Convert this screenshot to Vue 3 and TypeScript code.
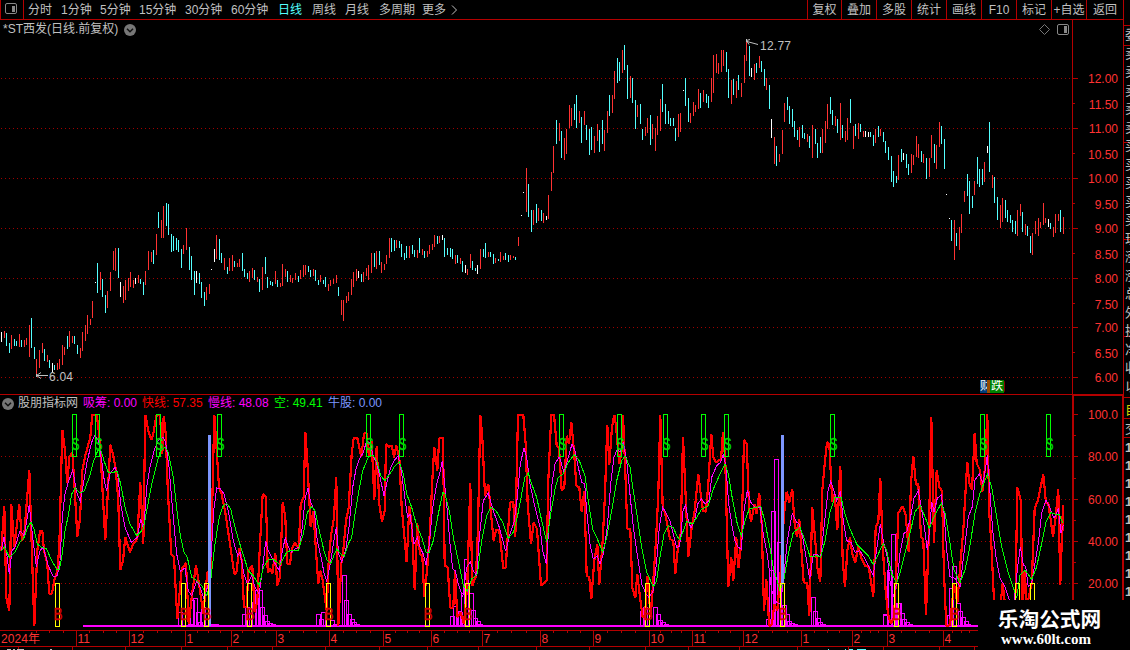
<script setup lang="ts">
interface Block { x: number; y: number; data: string }
interface Candle { x: number; y: number; h: number; c: string }

const periods = ['分时', '1分钟', '5分钟', '15分钟', '30分钟', '60分钟', '日线', '周线', '月线', '多周期', '更多']
const tools = ['复权', '叠加', '多股', '统计', '画线', 'F10', '标记', '+自选', '返回']

const readings = [
  { label: '股朋指标网', color: 'plain' },
  { label: '吸筹: 0.00', color: 'magenta' },
  { label: '快线: 57.35', color: 'red' },
  { label: '慢线: 48.08', color: 'magenta' },
  { label: '空: 49.41', color: 'green' },
  { label: '牛股: 0.00', color: 'blue' },
]

// Series are stored in thirds of a pixel, relative to the origin of their block.
const U = 3
const palette: Record<string, string> = { r: '#ff3232', c: '#54ffff', w: '#ffffff' }

const candleBlocks: Block[] = [
  { x: 0, y: 190, data: 'w4,426,456 r13,423,444 c19,429,468 c28,459,489 r34,435,477 c43,447,468 c49,453,468 r58,432,471 c64,450,471 r73,450,471 r79,444,465 r88,405,501 c94,384,474 c103,471,507 r109,507,552 r118,480,534 r127,459,489 c133,477,513 r142,495,516 c148,510,534 w157,519,546 c163,525,540 r172,519,540 r178,507,537 r187,465,525 r193,471,495 c202,438,477 r208,423,471 r217,438,459 c223,438,462 c232,465,492 r241,474,504 r247,426,483 r256,405,453 r262,375,432 r271,387,405 r277,333,384 w286,276,279 c292,219,309 r301,246,300 c307,267,321 c316,315,369 r322,303,354 r331,246,303 r340,183,240 r346,174,243 c355,174,264 w361,276,321 r370,288,339 r376,270,330 r385,264,303 r391,246,291 r400,270,294 w406,264,282 r415,255,279 c421,267,282 c430,276,315 r436,243,285 r445,183,240 r454,186,216 c460,180,222 r469,132,195 c475,66,114 r484,90,144 r490,48,144 c499,39,108 c505,42,135 c514,132,186 c520,138,183 c529,144,180 c535,150,186 c544,177,234 r550,165,192 r559,114,180 c568,171,240 c574,198,270 c583,243,315 w589,243,279 c598,249,282 c604,276,324 c613,306,348 r619,291,330 r628,282,312 w634,237,240 w643,177,216 r649,135,207 c658,147,210 c664,189,219 r673,204,240 c682,231,252 r688,204,243 r697,195,243 c703,213,231 r712,219,231 r718,207,231 c727,189,243 c733,237,261 c742,249,267 r748,243,276 r757,234,264 c763,240,270 r772,261,276 c778,267,306 r787,231,300' },
  { x: 260, y: 190, data: 'c16,201,252 c22,261,294 c31,273,285 c37,276,288 r46,243,282 c52,270,291 r61,279,291 r67,222,288 r76,237,261 c82,243,276 r91,255,276 r97,264,279 r106,249,270 c115,258,276 r121,240,267 r130,225,261 r136,225,255 c145,228,246 c151,240,261 r160,237,258 c166,240,273 c175,270,285 r181,255,276 c190,270,282 c196,261,291 r205,282,303 r211,270,288 r220,267,282 r229,255,279 c235,291,318 r244,330,375 r250,330,393 r259,318,339 r265,306,333 r274,267,315 r280,246,291 r289,237,273 w295,243,264 c304,252,276 r310,246,276 r319,234,258 r325,225,270 r334,189,249 c343,189,231 r349,183,237 c358,183,225 r364,216,249 r373,222,240 r379,195,222 r388,144,204 c394,144,186 c403,150,183 r409,150,174 c418,153,174 c424,162,201 c433,189,210 c439,168,204 r448,168,204 c457,165,192 c463,180,201 r472,180,204 c478,144,189 r487,177,195 c493,183,204 r502,183,201 r508,165,192 r517,162,180 r523,135,171 c532,138,162 r538,138,159 w547,135,150 c553,144,201 c562,174,195 c571,174,201 c577,177,207 r586,195,222 c592,195,219 r601,204,222 c607,213,246 w616,225,249 r622,237,255 r631,192,234 c637,213,240 c646,234,243 w652,225,252 r661,177,237 c670,177,201 c676,159,204 r685,186,201 c691,186,201 c700,192,222 r706,204,219 c715,207,213 r721,186,216 r730,198,210 c736,189,210 c745,195,216 r751,195,210 r760,198,204 c766,201,210 r775,141,168' },
  { x: 500, y: 30, data: 'w64,555,558 w70,486,489 r79,414,546 c85,462,561 c94,540,606 r100,540,585 c109,522,579 r115,534,573 c124,540,573 r130,549,579 w139,558,570 r145,495,567 r154,426,483 r160,348,429 c169,270,342 r178,279,333 c184,303,384 r193,324,390 r199,297,372 r208,225,294 r214,234,288 c223,222,270 c229,195,294 r238,243,279 c244,261,339 r253,243,285 c259,285,330 c268,297,375 c274,291,360 r283,318,369 r292,282,333 c298,300,366 c307,270,342 r313,300,363 r322,243,309 c328,195,258 r337,195,249 r343,123,207 c352,84,159 c358,96,153 r367,60,129 c373,45,120 c382,105,207 r391,138,204 c397,144,219 c406,210,297 r412,225,261 c421,222,282 c427,297,330 r436,291,318 r442,264,309 c451,255,345 r457,282,327 r466,294,363 r472,258,315 r481,207,303 c487,162,246 c496,222,282 c505,243,282 c511,264,288 c520,264,288 c526,294,333 r535,252,321 r541,249,306 w550,180,183 c556,144,228 c565,204,276 r571,249,279 r580,216,258 r586,225,246 r595,177,237 c601,189,234 r610,180,216 c619,192,219 c625,198,234 r634,144,216 r640,75,189 r649,72,129 r655,99,132 r664,60,126 r670,60,108 c679,66,126 c685,117,204 r694,150,222 c700,147,195 r709,153,204 c715,135,180 r724,159,201 r733,75,159 r739,36,93 c748,48,138 w754,114,141 r763,102,150 c769,99,129 r778,78,114 c784,93,126 c793,117,168 r799,144,180 c808,165,237 w814,267,324 r823,321,402 c829,348,408 r838,372,396' },
  { x: 780, y: 30, data: 'r7,300,372 r13,219,276 c22,201,240 c28,228,282 c37,237,291 c43,273,321 c52,300,330 r58,291,351 c67,285,324 c73,309,327 r82,312,336 c88,318,354 r97,285,384 c106,297,342 c112,339,384 c121,321,369 r127,297,369 r136,273,339 r142,222,297 c151,201,252 c157,240,285 r166,258,288 c172,267,309 r181,219,330 c187,285,324 r196,303,336 r202,264,330 c211,207,279 r220,288,357 c226,282,318 r235,279,327 c241,282,306 r250,303,321 w256,303,321 w265,306,321 c271,306,321 c280,315,348 r286,297,339 c295,288,321 r301,297,318 c310,306,336 c316,333,369 c325,351,390 c334,378,456 c340,423,471 c349,438,459 r355,375,450 c364,357,396 w370,369,390 c379,372,414 c385,402,435 r394,372,429 r400,375,405 r409,318,381 r415,342,384 c424,363,396 r430,372,399 c439,384,447 r448,384,441 r454,315,384 c463,342,399 r469,345,417 r478,276,351 c484,288,342 c493,327,417 w499,492,495 w508,564,567 c514,570,633 r523,570,690 c529,609,648 r538,591,660 r544,552,609 r553,483,516 c562,432,498 c568,453,552 c577,498,534 r583,453,495 c592,381,462 c598,417,471 c607,417,465 r613,396,456 w622,348,369 c628,276,426 r637,435,474 c643,441,519 c652,501,570 r661,525,594 r667,504,576 c676,510,564 c682,540,576 c691,555,579 c697,570,606 c706,573,612 r712,540,618 r721,522,558 c727,546,606 r736,582,615 c742,588,618 c751,618,669 r757,609,675 r766,573,612 r775,564,618 r781,576,594 r790,519,585 r796,564,579 w805,567,591 c811,579,597 r820,591,621 r826,552,609 r835,552,573 c841,540,606 r850,561,612' },
]

const candles: Candle[] = candleBlocks.flatMap((b) =>
  b.data.split(' ').map((s) => {
    const [x, top, bottom] = s.slice(1).split(',').map(Number)
    return { x: b.x + Math.floor(x / U), y: b.y + Math.round(top / U), h: Math.round((bottom - top) / U), c: palette[s[0]] }
  }),
)

const fast: Block[] = [
  { x: 0, y: 394, data: '4,472 13,335 19,610 28,652 34,330 43,460 58,330 66,440 73,420 88,228 103,697 112,470 120,412 127,410 132,470 142,510 148,600 156,598 163,560 172,530 178,460 187,107 195,170 202,268 208,190 217,175 225,300 232,428 240,375 247,230 256,185 271,130 277,62 290,62 296,110 303,205 316,438 331,152 340,185 347,225 355,320 361,528 369,500 376,430 390,475 400,450 412,435 421,265 430,450 436,62 445,110 454,138 460,120 469,65 480,62 487,180 491,65 497,120 503,280 514,482 522,490 532,675 545,525 558,507 566,690 575,610 588,513 600,590 610,660 622,535 632,530 643,62 650,170 657,280 665,300 675,350 690,450' },
  { x: 220, y: 394, data: '43,540 49,538 58,462 65,500 72,640 80,640 85,530 97,515 104,655 112,620 120,450 128,300 137,308 141,420 143,535 150,525 157,538 166,478 172,575 180,550 188,324 196,370 202,510 210,510 216,465 225,445 236,465 242,330 251,310 256,113 262,200 272,400 280,350 288,470 295,570 301,530 308,560 320,650 326,500 333,425 342,370 349,248 355,697 364,510 370,470 378,380 386,340 395,180 401,132 412,132 424,190 432,118 440,118 447,190 455,140 463,318 470,155 478,330 486,383 494,350 498,150 506,158 515,155 522,190 529,155 538,190 545,340 560,505 568,337 576,400 584,588 592,388 600,480 607,485 613,610 622,520 630,410 637,260 643,160 652,230 658,132 669,132 674,515 683,520 691,642 700,640' },
  { x: 440, y: 394, data: '45,530 52,670 62,655 72,690 82,570 91,268 97,575 108,545 114,400 121,62 127,130 135,305 145,270 152,350 161,440 168,408 178,410 190,523 197,520 210,325 220,325 226,430 234,62 250,62 257,150 263,330 273,450 281,385 291,405 303,575 320,558 324,280 334,62 342,62 350,155 357,160 365,290 373,282 380,125 387,150 394,85 402,170 409,275 418,280 425,355 433,290 440,545 448,550 454,615 463,500 472,450 478,572 488,440 495,300 502,92 508,212 516,100 523,62 528,95 538,210 545,170 549,62 556,230 562,405 571,405 577,580 586,612 592,540 600,610 608,670 615,670 622,545 632,670 640,560 648,440 655,300 661,62' },
  { x: 660, y: 394, data: '8,340 16,360 30,435 40,440 46,540 53,470 62,420 69,128 78,330 85,490 95,400 104,350 115,240 122,300 129,350 138,353 145,270 154,120 160,190 168,205 183,195 189,115 196,200 205,580 214,490 220,560 229,430 235,523 244,450 252,138 260,150 267,340 273,383 284,330 290,360 298,297 305,390 312,650 319,555 328,697 336,690 343,630 352,650 362,530 372,360 380,293 388,325 397,285 403,380 411,430 418,375 431,565 442,568 448,665 457,340 465,430 472,520 481,565 487,290 494,210 501,145 508,150 517,325 524,300 532,408 541,215 548,500 555,578 562,470 570,430 577,480 586,505 595,458 605,495 615,515 626,518 640,608 647,400 655,385 661,252 668,460 677,590 684,660 693,690 702,670 709,530' },
  { x: 880, y: 370, data: '55,430 68,408 77,435 86,545 93,340 100,258 108,345 115,340 123,500 130,510 138,735 147,480 154,140 162,520 170,300 178,350 186,365 192,610 199,768 210,765 222,640 232,700 243,560 250,480 262,275 268,340 276,360 284,188 290,280 300,300 307,365 314,300 322,133 328,430 334,520 343,710 361,710 368,640 376,710 400,760 407,655 412,352 422,390 428,710 434,600 440,710 455,640 464,415 474,390 490,313 498,400 505,400 512,450 519,500 526,450 535,358 541,645 549,405 550,482' },
]

const slow: Block[] = [
  { x: 0, y: 394, data: '4,470 12,430 20,480 28,540 36,470 45,460 60,410 73,425 88,332 97,420 109,518 120,470 130,460 145,515 160,548 172,545 180,500 187,370 195,300 205,265 218,228 230,295 241,322 250,270 262,200 275,145 284,125 295,140 305,200 313,260 320,290 330,240 345,220 353,240 362,330 375,400 394,445 412,430 422,375 431,405 440,280 450,220 462,170 475,140 490,130 497,145 507,220 518,350 530,480 541,532 555,522 565,590 575,605 590,560 600,580 612,615 625,570 634,480 641,350 650,282 660,283 672,300 685,350 700,440 713,485' },
  { x: 220, y: 394, data: '60,475 72,540 82,570 95,545 105,580 118,600 128,520 137,440 145,470 160,500 178,530 188,465 196,432 205,460 215,475 228,463 238,460 247,400 256,310 264,283 272,325 283,350 292,440 303,490 313,540 320,560 331,510 340,450 349,400 356,480 365,503 377,470 387,400 398,280 408,225 418,195 430,175 440,140 452,150 460,190 468,200 478,240 492,305 502,260 512,220 522,200 535,185 545,240 556,320 563,370 570,360 582,450 592,430 600,460 610,480 618,512 628,450 637,350 650,270 660,235 667,200 673,260 682,350 690,450' },
  { x: 440, y: 394, data: '38,525 46,530 55,570 68,610 80,520 91,503 100,530 110,545 118,430 130,320 145,297 160,350 178,400 197,472 210,420 222,385 232,310 241,210 252,162 260,190 270,270 285,340 300,400 308,470 319,510 328,380 336,270 345,210 358,188 372,235 385,190 396,150 405,170 415,220 425,265 434,270 440,350 450,450 460,495 472,485 480,510 490,480 502,400 512,270 522,190 532,165 540,175 550,145 560,200 568,280 580,400 590,470 605,570 618,600 627,610 640,590 650,500 658,400 668,340 680,360 690,380 700,420' },
  { x: 660, y: 394, data: '50,460 58,458 62,430 69,350 77,332 85,380 93,403 104,380 113,330 124,315 135,330 147,320 155,250 170,215 182,205 190,180 198,220 206,330 215,390 225,440 235,460 244,466 252,350 262,288 272,325 285,340 300,340 310,420 322,480 335,590 350,625 362,630 372,540 382,440 397,358 410,385 418,390 428,430 440,500 449,555 460,480 470,480 482,490 494,380 504,290 512,262 522,290 530,320 541,292 550,380 560,440 573,445 585,475 600,470 612,490 628,520 640,545 648,480 661,390 670,440 682,490 690,560 700,610 712,560' },
  { x: 880, y: 370, data: '60,550 72,490 80,485 90,450 102,385 115,362 125,420 133,470 142,540 150,470 155,395 162,425 172,385 184,375 192,430 200,540 210,620 225,625 240,650 252,550 265,440 277,410 285,330 298,312 308,340 316,300 322,255 330,370 338,480 348,560 360,625 375,650 388,690 400,720 412,600 421,530 430,585 437,590 445,650 455,640 465,580 475,520 485,430 498,390 510,415 522,445 530,430 535,415 543,490 550,465' },
]

const empty: Block[] = [
  { x: 0, y: 394, data: '4,472 13,458 28,490 45,475 60,445 73,430 85,395 93,385 102,405 112,450 125,460 140,465 155,500 170,525 178,525 185,490 195,410 205,365 215,300 226,282 240,297 253,290 268,250 280,205 293,170 303,170 312,200 325,235 340,235 352,232 362,270 375,340 390,390 410,425 430,405 440,350 455,270 470,210 480,175 495,160 505,175 520,250 532,360 542,430 552,475 562,490 575,550 590,560 605,575 620,605 632,560 645,450 658,370 670,335 680,328 692,345 705,400' },
  { x: 220, y: 394, data: '58,445 72,490 85,530 100,545 118,575 130,520 145,497 160,495 180,512 200,475 215,468 235,468 250,420 262,355 275,338 285,350 298,410 312,470 322,500 332,508 350,465 362,480 373,487 385,450 395,430 405,360 415,300 428,230 445,190 458,183 470,200 482,245 495,260 510,240 525,215 538,203 550,240 560,300 575,340 590,395 605,430 618,475 628,475 640,440 655,360 668,295 675,300' },
  { x: 440, y: 394, data: '28,350 40,430 55,500 70,575 82,590 95,555 112,540 125,440 140,365 153,340 168,350 188,385 205,433 220,415 232,370 245,300 255,250 265,238 275,270 290,310 305,380 320,445 332,360 345,285 355,250 370,240 385,205 403,182 418,200 435,245 445,320 458,405 470,430 488,475 500,430 515,350 530,260 545,200 555,185 570,220 580,290 592,370 605,460 620,535 640,578 650,560 660,490 672,420 685,395 700,400 710,425' },
  { x: 660, y: 394, data: '60,438 70,410 80,382 98,390 110,370 125,345 145,335 160,285 180,240 195,210 205,240 218,320 232,390 244,425 255,380 268,345 285,340 303,338 315,385 328,450 340,520 360,590 372,555 385,480 400,415 420,400 435,440 450,488 470,485 482,490 495,440 510,355 525,310 543,310 555,360 570,405 590,450 610,470 625,485 640,512 655,480 670,448 680,470 695,540 710,568' },
  { x: 880, y: 370, data: '60,610 75,550 90,490 105,425 120,405 135,440 148,475 158,450 170,425 184,400 195,430 210,520 222,600 240,638 255,600 268,540 285,430 300,370 322,313 335,350 350,440 365,530 385,610 410,685 420,615 435,600 455,628 470,590 485,520 498,455 512,428 525,432 537,432 548,458' },
]

const columns: Block[] = [
  { x: 0, y: 394, data: '541,655 570,690 578,620 586,612 594,655 602,685 610,640 638,690 650,692' },
  { x: 220, y: 394, data: '73,660 81,640 104,625 112,590 120,590 128,640 135,665 143,682 150,688 160,692 295,660 303,676 311,655 338,678 347,690 372,544 380,620 388,660 396,675 404,685 412,690' },
  { x: 440, y: 394, data: '37,667 46,637 54,652 62,655 70,597 78,495 94,598 100,650 107,672 114,682 121,690 607,652 615,640 646,640 655,662 662,678 670,685 678,690' },
  { x: 660, y: 394, data: '325,676 333,530 341,352 349,196 357,445 373,635 381,660 389,682 397,688 405,692 459,610 466,652 474,672 482,684 490,690 676,660 690,528 700,421 716,628' },
  { x: 880, y: 370, data: '16,735 28,600 40,493 58,700 66,730 74,748 82,758 90,764 207,735 215,655 224,590 234,700 242,725 250,742 258,755 266,762' },
]

const pairs = (blocks: Block[]): number[][] =>
  blocks.flatMap((b) => b.data.split(' ').map((s) => {
    const [x, y] = s.split(',').map(Number)
    return [b.x + x / U, b.y + y / U]
  }))
const path = (blocks: Block[]): string => pairs(blocks).map((p) => p.map((v) => v.toFixed(1)).join(',')).join(' ')
const hist = pairs(columns).map(([x, y]) => ({ x: Math.floor(x) - 1.5, y: Math.floor(y) + 0.5 }))

const sells = [74, 97, 158, 219, 368, 401, 561, 619, 665, 703, 726, 832, 982, 1048]
const buyBoxes = [57, 183, 206, 249, 328, 427, 467, 647, 782, 896, 954, 1017, 1032]
const buyLabels = buyBoxes.filter((x) => x < 978)

const priceAxis = ['12.00', '11.50', '11.00', '10.50', '10.00', '9.50', '9.00', '8.50', '8.00', '7.50', '7.00', '6.50', '6.00']
const priceY = [78, 104, 128, 154, 178, 204, 228, 254, 278, 304, 327, 353, 377]
const priceTicks = [78, 103, 128, 153, 178, 203, 228, 253, 278, 303, 327, 352, 377]
const indexAxis = [['100.0', 414], ['80.00', 456], ['60.00', 499], ['40.00', 541], ['20.00', 583]] as [string, number][]
const gridRows = [78, 128, 178, 228, 278, 327, 377, 456, 499, 541, 583]

const months: [string, number][] = [['11', 76], ['12', 129], ['1', 185], ['2', 231], ['3', 276], ['4', 329], ['5', 383], ['6', 431], ['7', 482], ['8', 540], ['9', 593], ['10', 649], ['11', 692], ['12', 743], ['1', 801], ['2', 852], ['3', 887], ['4', 943]]
const monthEdges = [22, ...months.map((m) => m[1]), 978]
const minorTicks = monthEdges.slice(0, -1).flatMap((a, i) => [0.25, 0.5, 0.75].map((f) => Math.round(a + (monthEdges[i + 1] - a) * f)))

const sideRules = [25, 45, 142, 239, 336, 397, 418, 437]
const quoteRows = ['委', '卖', '卖', '卖', '卖', '卖', '买', '买', '买', '买', '买', '现', '涨', '涨', '总', '外', '换', '净', '收', '以']
const ticks = Array.from({ length: 9 }, (_, i) => 442 + i * 18)
</script>

<template>
  <main class="terminal">
    <nav class="toolbar">
      <span class="layout">
        <svg width="13" height="11"><rect x=".5" y=".5" width="11" height="10" rx="1.5" fill="none" stroke="#888" /><rect x="7" y="3" width="3" height="6" fill="#888" /></svg>
      </span>
      <div class="periods">
        <span v-for="p in periods" :key="p" :class="{ active: p === '日线' }">{{ p }}</span>
        <svg width="7" height="10"><path d="M1 .5 5.5 5 1 9.5" fill="none" stroke="#c0c0c0" /></svg>
      </div>
      <div class="tools"><span v-for="t in tools" :key="t">{{ t }}</span></div>
    </nav>

    <svg class="chart" width="1130" height="650" viewBox="0 0 1130 650">
      <g class="grid">
        <line v-for="y in gridRows" :key="y" x1="1" x2="1072" :y1="y + 0.5" :y2="y + 0.5" />
      </g>

      <g shape-rendering="crispEdges">
        <rect v-for="(k, i) in candles" :key="i" :x="k.x" :y="k.y" width="1" :height="k.h" :fill="k.c" />
      </g>

      <g class="note">
        <path d="M36 375.5H48M41 372.5 36.5 375.5 41 378.5M36.5 374v3" />
        <text x="49" y="381" textLength="24">6.04</text>
        <path d="M758 44.5 747 41.5M750 39.5 746.5 40.5 749 44.5M746.5 39v3" />
        <text x="760" y="50" textLength="31">12.77</text>
      </g>

      <g class="hist" shape-rendering="crispEdges">
        <rect v-for="(b, i) in hist" :key="i" :x="b.x" :y="b.y" width="4" :height="626.5 - b.y" />
        <path d="M83 626H978" />
      </g>
      <g shape-rendering="crispEdges" fill="none">
        <polyline class="fast" :points="path(fast)" />
        <polyline class="slow" :points="path(slow)" />
        <polyline class="empty" :points="path(empty)" />
      </g>
      <g fill="#7d96ff"><rect x="208" y="435" width="3" height="191" /><rect x="781" y="435" width="3" height="149" /></g>
      <g v-for="x in sells" :key="'s' + x" class="sell">
        <rect :x="x - 1.5" y="414.5" width="4" height="42" />
        <text :x="x - 2.5" y="449.5" textLength="8" lengthAdjust="spacingAndGlyphs">S</text>
      </g>
      <g class="buy">
        <rect v-for="x in buyBoxes" :key="'b' + x" :x="x - 1.5" y="583.5" width="4" height="43" />
        <text v-for="x in buyLabels" :key="'l' + x" :x="x - 3.5" y="619.5" textLength="9" lengthAdjust="spacingAndGlyphs">B</text>
      </g>

      <g class="frame" shape-rendering="crispEdges">
        <path d="M0 19.5H1123M0 394.5H1123M0 630.5H1072M0 646.5H1072M1072.5 20V650M1123.5 0V650M.5 0V20" />
        <path d="M1073 395H1123M1073 394V630M1123 394V630" stroke-width="2" />
        <path v-for="(y, i) in priceTicks" :key="y" :d="`M1073 ${y + 0.5}h${i % 2 ? 2 : 5}`" />
        <path v-for="y in [414, 456, 499, 541, 583]" :key="'i' + y" :d="`M1073 ${y + 0.5}h5`" />
        <path v-for="y in [435, 478, 520, 562]" :key="'j' + y" :d="`M1073 ${y + 0.5}h3`" />
        <path v-for="m in months" :key="m[1]" :d="`M${m[1] + 0.5} 630v16`" />
        <path v-for="x in minorTicks" :key="'t' + x" :d="`M${x + 0.5} 630v3`" />
        <path v-for="m in monthEdges" :key="'u' + m" :d="`M${m - 3.5} 647v3`" />
      </g>
      <g class="axis">
        <text v-for="(p, i) in priceAxis" :key="p" x="1118" :y="priceY[i] + 5" text-anchor="end">{{ p }}</text>
        <text v-for="p in indexAxis" :key="p[0]" x="1118" :y="p[1] + 5" text-anchor="end">{{ p[0] }}</text>
        <text x="1" y="643" textLength="39">2024年</text>
        <text v-for="m in months" :key="m[1]" :x="m[1] + 1.5" y="643">{{ m[0] }}</text>
      </g>
      <g shape-rendering="crispEdges">
        <path d="M7 649.5h4M13 649.5h2M17 649.5h7M50 649.5h2" stroke="#c0c0c0" />
        <path d="M828 649.5h1M845 649.5h1M849 649.5h4M857 649.5h9" stroke="#54ffff" />
      </g>

      <g fill="none" stroke="#777">
        <path d="M1044.5 24.5 1049.5 29.5 1044.5 34.5 1039.5 29.5Z" />
        <rect x="1057.5" y="24.5" width="11" height="10" rx="1.5" stroke="#888" />
        <rect x="1064" y="26" width="3" height="7" fill="#888" stroke="none" />
      </g>
    </svg>

    <header class="title">
      <span>*ST西发(日线.前复权)</span>
      <svg width="12" height="12"><circle cx="6" cy="6" r="6" fill="#777" /><path d="M3 4.7 6 7.7 9 4.7" fill="none" stroke="#111" stroke-width="1.5" /></svg>
    </header>

    <header class="readout">
      <svg width="13" height="12"><circle cx="6" cy="6" r="6" fill="#777" /><path d="M3 4.7 6 7.7 9 4.7" fill="none" stroke="#111" stroke-width="1.5" /></svg>
      <span v-for="r in readings" :key="r.label" :class="r.color">{{ r.label }}</span>
    </header>

    <div class="badge"><i class="fin">财</i><i class="gap"></i><i class="fall">跌</i></div>

    <aside class="side">
      <svg width="7" height="650">
        <path v-for="y in sideRules" :key="y" :d="`M0 ${y + 0.5}h7`" stroke="#b40000" />
        <text v-for="(q, i) in quoteRows" :key="i" x="1" :y="39 + i * 18.5">{{ q }}</text>
        <text x="1" y="414" class="yellow">自</text>
        <text x="1" y="433">交</text>
        <text v-for="y in ticks" :key="'n' + y" x="1" :y="y + 10" class="count">1</text>
      </svg>
    </aside>

    <footer class="mark"><b>乐淘公式网</b><strong>www.60lt.com</strong></footer>
  </main>
</template>

<style>
html, body { margin: 0; background: #000; overflow: hidden; }
</style>

<style scoped>
.terminal { position: relative; width: 1130px; height: 650px; overflow: hidden; background: #000; color: #c0c0c0; font: 12px/19px "Liberation Sans", "Noto Sans CJK SC", sans-serif; }
.toolbar { display: flex; width: 1123px; height: 19px; line-height: 20px; white-space: nowrap; }
.layout { box-sizing: border-box; width: 24px; padding: 3px 0 0 5px; border-right: 1px solid #b40000; line-height: 0; }
.periods { display: grid; grid-template-columns: 33px 39px 39px 46px 46px 47px 34px 33px 34px 43px 29px 8px; grid-template-rows: 19px; padding-left: 4px; align-items: center; }
.periods .active { color: #54ffff; }
.tools { display: grid; grid-template-columns: 34px repeat(7, 35px) 37px; margin-left: auto; text-align: center; }
.tools span { border-left: 1px solid #b40000; height: 19px; }
.chart { position: absolute; left: 0; top: 0; }
.grid line { stroke: #a00000; stroke-dasharray: 1 3; shape-rendering: crispEdges; }
.note path { fill: none; stroke: #c0c0c0; }
.note text { fill: #c0c0c0; }
.hist { fill: none; stroke: #f0f; }
.hist path { stroke-width: 2; }
.fast { stroke: #f00; stroke-width: 2.2; stroke-linejoin: bevel; }
.slow { stroke: #f0f; }
.empty { stroke: #0f0; }
.sell rect { fill: none; stroke: #0f0; shape-rendering: crispEdges; }
.sell text { fill: #00d800; stroke: #00d800; }
.buy rect { fill: none; stroke: #ff0; shape-rendering: crispEdges; }
.buy text { fill: #d80000; stroke: #d80000; }
.sell text, .buy text { font-family: "Liberation Sans", sans-serif; font-size: 17px; stroke-width: 0.4; }
.frame path { fill: none; stroke: #b40000; }
.axis text { fill: #ff3232; }
.title { position: absolute; left: 3px; top: 20px; display: flex; align-items: center; gap: 5px; height: 19px; white-space: nowrap; }
.title span { width: 116px; }
.readout { position: absolute; left: 2px; top: 394px; display: grid; grid-template-columns: 16px 65px 59px 66px 66px 54px 60px; align-items: center; white-space: nowrap; }
.magenta { color: #f0f; }
.red { color: #f00; }
.green { color: #0f0; }
.blue { color: #7d96ff; }
.badge { position: absolute; left: 980px; top: 380px; display: flex; height: 13px; line-height: 13px; color: #fff; border-right: 1px solid #800; border-radius: 0 3px 3px 0; }
.badge i { font-style: normal; overflow: hidden; }
.fin { width: 7px; background: #003c78; }
.gap { width: 3px; background: #964b00; }
.fall { width: 14px; background: #008200; text-align: center; }
.side { position: absolute; left: 1124px; top: 0; width: 6px; height: 650px; overflow: hidden; }
.side text { fill: #c0c0c0; font-size: 13px; }
.side .yellow { fill: #d0d000; }
.side .count { font-weight: bold; }
.mark { position: absolute; left: 978px; top: 600px; display: flex; flex-direction: column; align-items: center; box-sizing: border-box; width: 152px; height: 50px; padding: 7px 9px 0 0; background: #000; color: #fff; }
.mark b { font: 700 20.7px/23px "Noto Sans CJK SC", sans-serif; }
.mark strong { font: 700 15px/18px "Liberation Serif", serif; margin-right: 7px; }
</style>
